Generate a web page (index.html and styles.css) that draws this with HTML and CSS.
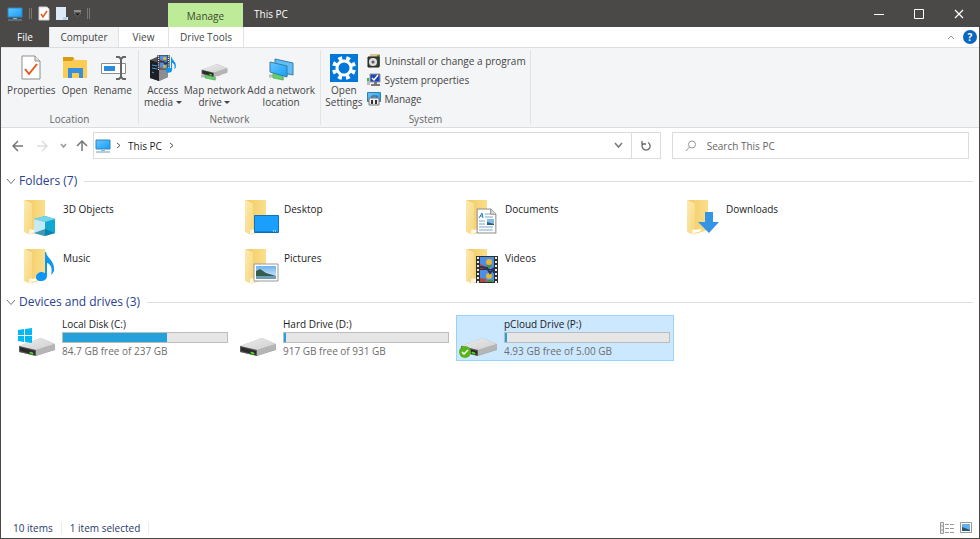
FILE: index.html
```html
<!DOCTYPE html>
<html lang="en">
<head>
    <meta charset="UTF-8">
    <meta name="viewport" content="width=device-width, initial-scale=1.0">
    <title>This PC</title>
    <link rel="stylesheet" href="styles.css">
</head>
<body>
    <!-- Shared icon parts -->
    <svg class="defs" width="0" height="0" aria-hidden="true">
        <defs>
            <linearGradient id="gBack" x1="0" y1="0" x2="1" y2="0">
                <stop offset="0" stop-color="#f1c95f"/>
                <stop offset="1" stop-color="#fbdf8c"/>
            </linearGradient>
            <linearGradient id="gFront" x1="0" y1="0" x2="1" y2="1">
                <stop offset="0" stop-color="#fdeab0"/>
                <stop offset="1" stop-color="#f6d67c"/>
            </linearGradient>
            <linearGradient id="gScreen" x1="0" y1="0" x2="1" y2="1">
                <stop offset="0" stop-color="#6cc5ff"/>
                <stop offset="0.5" stop-color="#3db2fc"/>
                <stop offset="1" stop-color="#1a9cf5"/>
            </linearGradient>
            <linearGradient id="gDrive" x1="0" y1="0" x2="1" y2="1">
                <stop offset="0" stop-color="#ececec"/>
                <stop offset="1" stop-color="#cfcfcf"/>
            </linearGradient>
            <linearGradient id="gSky" x1="0" y1="0" x2="0" y2="1">
                <stop offset="0" stop-color="#6fb1ee"/>
                <stop offset="1" stop-color="#dff1fc"/>
            </linearGradient>
            <symbol id="folder" viewBox="0 0 34 38">
                <path d="M1 1h21v30l-13 4V5z" fill="url(#gBack)"/>
                <path d="M9 34v-3l6-1v2z" fill="#fff"/>
                <path d="M1 1l8 4v29l-1 2-7-3z" fill="url(#gFront)"/>
                <path d="M6 31l3-1v4l-1 2-2-1z" fill="#fff6dc"/>
            </symbol>
            <symbol id="drive" viewBox="0 0 38 20">
                <path d="M1 9L23 1l14 6v6L18 19 1 15z" fill="#a9a9a9"/>
                <path d="M1 9L23 1l14 6-19 6z" fill="url(#gDrive)"/>
                <path d="M18 13l19-6v5l-19 7z" fill="#b5b5b5"/>
                <path d="M1 9l17 4v6L1 15z" fill="#5a5a5a"/>
                <path d="M2 10l15 4v4L2 14z" fill="#2b2b2b"/>
                <path d="M12 15l3 1v1l-3-1z" fill="#4bee20" stroke="#4bee20" stroke-width=".7"/>
            </symbol>
            <symbol id="monitor" viewBox="0 0 16 14">
                <path d="M1 1h14v9H1z" fill="url(#gScreen)" stroke="#2c86c0"/>
                <path d="M6 11h4v1H6z" fill="#9db6c6"/>
                <path d="M1 13h14" stroke="#6f97b2"/>
            </symbol>
            <symbol id="film" viewBox="0 0 22 27">
                <path d="M0 0h22v27H0z" fill="#30302e"/>
                <path d="M4 1h14v12H4zM4 14h14v12H4z" fill="#4b8fe8"/>
                <path d="M2 1v26M20 1v26" stroke="#eee" stroke-width="2" stroke-dasharray="2 2"/>
                <path d="M4 8l5 2 2 3H4zM4 22l6 1v3H4z" fill="#b5483c"/>
                <circle cx="13" cy="6" r="3" fill="#e8b829"/>
                <circle cx="13" cy="20" r="3" fill="#e8b829"/>
                <path d="M10 9h6l-3 4zM11 24h6v2h-6z" fill="#4d8f36"/>
                <path d="M4 11l7 1 3 5 3-4 1 4" fill="none" stroke="#263261" stroke-width="2"/>
            </symbol>
            <symbol id="note" viewBox="0 0 20 30">
                <path d="M10 0c1 7 9 8 8 19-1 2-2 3-3 4 2-8-1-11-4-12v13c0 3-3 5-6 5s-5-1-5-4 3-5 6-5l3 1V0z" fill="#0e96f3"/>
            </symbol>
            <symbol id="netplug" viewBox="0 0 20 9">
                <path d="M0 4h4M12 6l3 1M16 3l3-1" stroke="#b9bdb9" stroke-width="3"/>
                <path d="M4 1l10 2v5L4 6z" fill="#61cf6b" stroke="#43a94d" stroke-width=".6"/>
            </symbol>
            <symbol id="page" viewBox="0 0 20 25">
                <path d="M1 1h13l5 5v18H1z" fill="#fdfdfd" stroke="#8e8e8e"/>
                <path d="M14 1v5h5" fill="#dcdcdc" stroke="#8e8e8e"/>
            </symbol>
        </defs>
    </svg>

    <div class="window">
        <header class="titlebar">
            <div class="quick">
                <svg width="16" height="14" aria-hidden="true"><use href="#monitor"/></svg>
                <span class="grip"></span>
                <button class="plain" aria-label="Properties">
                    <svg width="12" height="15" viewBox="0 0 12 15"><path d="M1 1h8l2 2v11H1z" fill="#fff" stroke="#cfcfcf"/><path d="M3 8l2 3 4-6" fill="none" stroke="#e8571d" stroke-width="1.5"/></svg>
                </button>
                <button class="plain" aria-label="New folder">
                    <svg width="12" height="15" viewBox="0 0 12 15"><path d="M0 1h10v10h2v3H0z" fill="#dceaf8"/><path d="M7 11h4v3H7z" fill="#b5cfe9"/></svg>
                </button>
                <button class="plain" aria-label="Customize toolbar">
                    <svg width="7" height="7" viewBox="0 0 7 7"><path d="M0 1h7" stroke="#d0d0d0"/><path d="M0 3h7L3.500 6z" fill="#111" stroke="#aaa" stroke-width=".5"/></svg>
                </button>
                <span class="grip"></span>
            </div>
            <div class="context-title">Manage</div>
            <h1>This PC</h1>
            <div class="controls">
                <button class="plain" aria-label="Minimize"><svg width="10" height="10"><path d="M0 5.500h10" stroke="#fff"/></svg></button>
                <button class="plain" aria-label="Maximize"><svg width="10" height="10"><path d="M.5.500h9v9h-9z" fill="none" stroke="#fff"/></svg></button>
                <button class="plain" aria-label="Close"><svg width="10" height="10"><path d="M1 1l8 8M9 1l-8 8" stroke="#fff" stroke-width="1.200"/></svg></button>
            </div>
        </header>

        <nav class="tabs">
            <button class="tab file">File</button>
            <button class="tab active">Computer</button>
            <button class="tab view">View</button>
            <button class="tab tools">Drive Tools</button>
            <div class="help">
                <button class="plain" aria-label="Collapse ribbon"><svg width="8" height="6"><path d="M1 5l3-3 3 3" fill="none" stroke="#999"/></svg></button>
                <button class="plain round" aria-label="Help">?</button>
            </div>
        </nav>

        <div class="ribbon">
            <section class="group location">
                <div class="tools-row">
                    <button class="tool">
                        <svg width="28" height="28" viewBox="0 0 28 28"><path d="M5 2h13l5 5v18H5z" fill="#fff" stroke="#8e8e8e"/><path d="M18 2v5h5" fill="#e6e6e6" stroke="#8e8e8e"/><path d="M8 15l4 5 8-10" fill="none" stroke="#e8571d" stroke-width="2"/></svg>
                        Properties
                    </button>
                    <button class="tool">
                        <svg width="28" height="28" viewBox="0 0 28 28"><path d="M2 3h10l2 3h12v18H2z" fill="#fccc55"/><path d="M2 3h10l1 2-2 2H2z" fill="#d79c14"/><path d="M7 24V14h15v10h-4v-5h-7v5z" fill="#3690dd"/></svg>
                        Open
                    </button>
                    <button class="tool">
                        <svg width="28" height="28" viewBox="0 0 28 28"><path d="M2.500 9.500h24v10h-24z" fill="#fff" stroke="#8c8c8c"/><path d="M5 12h11v5H5z" fill="#298ae0"/><path d="M17 3h3l2 2 2-2h3M22 4v20M17 25h3l2-2 2 2h3" fill="none" stroke="#666" stroke-width="2"/></svg>
                        Rename
                    </button>
                </div>
                <h2>Location</h2>
            </section>
            <section class="group network">
                <div class="tools-row">
                    <button class="tool">
                        <svg width="28" height="28" viewBox="0 0 28 28"><path d="M1 6l9-4 9 4v17l-9 4-9-3z" fill="#555"/><path d="M1 6l9 3v18l-9-3z" fill="#1d1f22"/><path d="M10 9l9-3v17l-9 4z" fill="#8b8f93"/><path d="M3 11l5 1M3 14l5 1M3 18l2 1" stroke="#3aa0ee"/><use href="#film" x="8" y="1" width="13" height="15"/><use href="#note" x="17" y="1" width="11" height="20"/></svg>
                        <span>Access<br>media <i class="caret"></i></span>
                    </button>
                    <button class="tool">
                        <svg width="28" height="28" viewBox="0 0 28 28"><use href="#netplug" x="1" y="18" width="20" height="9"/><use href="#drive" x="1" y="9" width="27" height="15"/></svg>
                        <span>Map network<br>drive <i class="caret"></i></span>
                    </button>
                    <button class="tool">
                        <svg width="28" height="28" viewBox="0 0 28 28"><use href="#netplug" x="2" y="18" width="20" height="9"/><path d="M8 5l18 4v12L8 17z" fill="#63bcf5" stroke="#347ea8"/><path d="M3 8l17 4v11L3 18z" fill="url(#gScreen)" stroke="#347ea8"/></svg>
                        <span>Add a network<br>location</span>
                    </button>
                </div>
                <h2>Network</h2>
            </section>
            <section class="group system">
                <div class="tools-row">
                    <button class="tool">
                        <svg width="28" height="28" viewBox="0 0 28 28"><path d="M0 0h28v28H0z" fill="#0078d9"/><circle cx="14" cy="14" r="7" fill="none" stroke="#fff" stroke-width="3"/><circle cx="14" cy="14" r="10" fill="none" stroke="#fff" stroke-width="4" stroke-dasharray="3.927 3.927" transform="rotate(11 14 14)"/></svg>
                        <span>Open<br>Settings</span>
                    </button>
                    <div class="small-tools">
                        <button class="small-tool">
                            <svg width="14" height="14" viewBox="0 0 14 14"><path d="M3 0h10v10H3z" fill="#d9c58f"/><path d="M10 1h3v11h-3z" fill="#639b53"/><path d="M1 3h11v10H1z" fill="#40423e" stroke="#222"/><circle cx="6" cy="8" r="4" fill="#ddd"/><circle cx="6" cy="8" r="1.500" fill="#555"/></svg>
                            Uninstall or change a program
                        </button>
                        <button class="small-tool">
                            <svg width="14" height="14" viewBox="0 0 14 14"><path d="M3 1h10v8H3z" fill="#1c45b9" stroke="#999"/><path d="M5 5l2 2 4-5" fill="none" stroke="#fff" stroke-width="1.500"/><path d="M0 5h3v7H0z" fill="#bbb"/><path d="M1 5v3" stroke="#38b948" stroke-width="2"/><path d="M4 12h9M7 10h3" stroke="#777" stroke-width="2"/></svg>
                            System properties
                        </button>
                        <button class="small-tool">
                            <svg width="14" height="14" viewBox="0 0 14 14"><path d="M.5.500h13v9H.5z" fill="url(#gScreen)" stroke="#347ea8"/><path d="M5 6V4h5v2" fill="none" stroke="#555"/><path d="M2 6h10v7H2z" fill="#eee" stroke="#777"/><path d="M5 8v4M9 8v4" stroke="#333" stroke-width="2"/></svg>
                            Manage
                        </button>
                    </div>
                </div>
                <h2>System</h2>
            </section>
        </div>

        <div class="navbar">
            <div class="arrows">
                <button class="plain" aria-label="Back"><svg width="12" height="12"><path d="M11 6H1M6 1L1 6l5 5" fill="none" stroke="#777" stroke-width="1.500"/></svg></button>
                <button class="plain" aria-label="Forward"><svg width="12" height="12"><path d="M1 6h10M6 1l5 5-5 5" fill="none" stroke="#ddd" stroke-width="1.500"/></svg></button>
                <button class="plain" aria-label="Recent locations"><svg width="7" height="6"><path d="M1 1l2.500 3L6 1" fill="none" stroke="#999" stroke-width="1.500"/></svg></button>
                <button class="plain" aria-label="Up"><svg width="12" height="12"><path d="M6 11V1M1 6l5-5 5 5" fill="none" stroke="#777" stroke-width="1.500"/></svg></button>
            </div>
            <div class="address">
                <svg width="16" height="14" aria-hidden="true"><use href="#monitor"/></svg>
                <svg width="5" height="7" aria-hidden="true"><path d="M1 1l3 2.500L1 6" fill="none" stroke="#555"/></svg>
                <button class="plain crumb">This PC</button>
                <svg width="5" height="7" aria-hidden="true"><path d="M1 1l3 2.500L1 6" fill="none" stroke="#555"/></svg>
                <button class="plain drop" aria-label="Previous locations"><svg width="9" height="7"><path d="M1 1l3.500 4L8 1" fill="none" stroke="#777" stroke-width="1.500"/></svg></button>
                <button class="plain refresh" aria-label="Refresh"><svg width="10" height="11"><path d="M7 2.500a4 4 0 1 1-5 1M1 1v3h4" fill="none" stroke="#666" stroke-width="1.300"/></svg></button>
            </div>
            <label class="search">
                <svg width="12" height="12" aria-hidden="true"><circle cx="7" cy="4.500" r="3.500" fill="none" stroke="#999"/><path d="M4.500 7L1 11" stroke="#999"/></svg>
                <input type="text" placeholder="Search This PC" aria-label="Search This PC">
            </label>
        </div>

        <main>
            <section>
                <div class="heading">
                    <button class="plain" aria-label="Toggle folders"><svg width="10" height="7"><path d="M1 1l4 4.500L9 1" fill="none" stroke="#777"/></svg></button>
                    <h2>Folders (7)</h2>
                </div>
                <div class="tiles folders">
                    <button class="tile">
                        <svg width="34" height="38" viewBox="0 0 34 38"><use href="#folder"/><path d="M11 20l11-3 10 3v14l-10 3-11-3z" fill="#11a8d3"/><path d="M11 20l11-3 10 3-10 3z" fill="#72d5e8"/><path d="M11 20l11 3v14l-11-3z" fill="#c5eaf2"/><path d="M11 34l11-4 10 4-10 3z" fill="#07749c" opacity=".7"/></svg>
                        <span>3D Objects</span>
                    </button>
                    <button class="tile">
                        <svg width="34" height="38" viewBox="0 0 34 38"><use href="#folder"/><path d="M10.500 16.500h24v17h-24z" fill="#1a9ffc" stroke="#1174b9"/><path d="M11 33h22" stroke="#0768a8"/><path d="M29 32h4" stroke="#fff" stroke-dasharray="1 1"/></svg>
                        <span>Desktop</span>
                    </button>
                    <button class="tile">
                        <svg width="34" height="38" viewBox="0 0 34 38"><use href="#folder"/><use href="#page" x="11" y="9" width="21" height="26"/><path d="M14 19l3-5 1 5M15 17h3" stroke="#2182c9" fill="none"/><path d="M20 15h5M20 18h8M14 22h6M14 25h6M14 28h14M14 31h14" stroke="#7aaacd"/><path d="M22 20h7v6h-7z" fill="#80bce5"/><path d="M22 23l7 2v1h-7z" fill="#345f6f"/></svg>
                        <span>Documents</span>
                    </button>
                    <button class="tile">
                        <svg width="34" height="38" viewBox="0 0 34 38"><use href="#folder"/><path d="M19 13h8v10h6L23 34 12 23h7z" fill="#3595e4"/></svg>
                        <span>Downloads</span>
                    </button>
                    <button class="tile">
                        <svg width="34" height="38" viewBox="0 0 34 38"><use href="#folder"/><use href="#note" x="13" y="4" width="20" height="30"/></svg>
                        <span>Music</span>
                    </button>
                    <button class="tile">
                        <svg width="34" height="38" viewBox="0 0 34 38"><use href="#folder"/><path d="M10 16h24v17H10z" fill="#fff" stroke="#999"/><path d="M12 18h20v13H12z" fill="url(#gSky)"/><path d="M12 23l4-2 6 4 10 3v1H12z" fill="#345d4d"/><path d="M12 28h20v3H12z" fill="#6d9eb5"/></svg>
                        <span>Pictures</span>
                    </button>
                    <button class="tile">
                        <svg width="34" height="38" viewBox="0 0 34 38"><use href="#folder"/><use href="#film" x="11" y="8" width="22" height="27"/></svg>
                        <span>Videos</span>
                    </button>
                </div>
            </section>

            <section>
                <div class="heading">
                    <button class="plain" aria-label="Toggle devices and drives"><svg width="10" height="7"><path d="M1 1l4 4.500L9 1" fill="none" stroke="#777"/></svg></button>
                    <h2>Devices and drives (3)</h2>
                </div>
                <div class="tiles drives">
                    <button class="tile">
                        <svg width="40" height="32" viewBox="0 0 40 32"><use href="#drive" x="1" y="11" width="38" height="20"/><path d="M1 4l6-1v6H1zM8 3l7-1v7H8zM1 10h6v6l-6-1zM8 10h7v7l-7-1z" fill="#00b9f5"/></svg>
                        <span class="info">
                            <span>Local Disk (C:)</span>
                            <progress max="237" value="151" aria-label="Space used on C:"></progress>
                            <span class="free">84.7 GB free of 237 GB</span>
                        </span>
                    </button>
                    <button class="tile">
                        <svg width="40" height="32" viewBox="0 0 40 32"><use href="#drive" x="1" y="11" width="38" height="20"/></svg>
                        <span class="info">
                            <span>Hard Drive (D:)</span>
                            <progress max="931" value="10" aria-label="Space used on D:"></progress>
                            <span class="free">917 GB free of 931 GB</span>
                        </span>
                    </button>
                    <button class="tile selected">
                        <svg width="40" height="32" viewBox="0 0 40 32"><use href="#drive" x="1" y="11" width="38" height="20"/><circle cx="6" cy="26" r="6" fill="#56b51b"/><path d="M3 26l2 2 4-4" fill="none" stroke="#fff" stroke-width="1.500"/></svg>
                        <span class="info">
                            <span>pCloud Drive (P:)</span>
                            <progress max="500" value="6" aria-label="Space used on P:"></progress>
                            <span class="free">4.93 GB free of 5.00 GB</span>
                        </span>
                    </button>
                </div>
            </section>
        </main>

        <footer>
            <span>10 items</span>
            <span>1 item selected</span>
            <div class="views">
                <button class="plain" aria-label="Details view"><svg width="14" height="12"><path d="M.5.500h3v11h-3zM.5 4h3M.5 8h3" fill="#e6edf5" stroke="#999"/><path d="M5 2.500h9M5 6.500h9M5 10.500h9" stroke="#999" stroke-dasharray="4 1"/></svg></button>
                <button class="plain" aria-label="Large icons view"><svg width="12" height="11"><path d="M.5.500h11v10H.5z" fill="#fff" stroke="#999"/><path d="M2 2h8v7H2z" fill="#67b0f0"/><path d="M2 5l3 1 5 2v1H2z" fill="#31556b"/></svg></button>
            </div>
        </footer>
    </div>
</body>
</html>
```

FILE: styles.css
```css
* {
    box-sizing: border-box;
}
body {
    margin: 0;
    font-family: "Open Sans", "Noto Sans", sans-serif;
    font-size: 10px;
    line-height: 12px;
    color: #1b1b1b;
    background-color: #fff;
}
h1, h2 {
    margin: 0;
    font-weight: normal;
}
svg {
    display: block;
    flex: none;
}
button {
    font: inherit;
    color: inherit;
    background: none;
    border: none;
    padding: 0;
}
.defs {
    position: absolute;
}
.plain {
    display: flex;
    align-items: center;
    justify-content: center;
}
.window {
    display: flex;
    flex-direction: column;
    min-height: 100vh;
    border: 1px solid #4a4947;
    border-top: none;
}

/* Title bar */
.titlebar {
    display: flex;
    height: 27px;
    background-color: #4a4947;
    color: #fff;
}
.quick {
    display: flex;
    align-items: center;
    gap: 6px;
    width: 167px;
    padding-left: 6px;
}
.grip {
    width: 3px;
    height: 11px;
    border: 1px solid #777;
    border-width: 0 1px;
}
.context-title {
    width: 75px;
    margin-top: 3px;
    padding-top: 7px;
    text-align: center;
    background-color: #beeb98;
    color: #3c4a30;
}
h1 {
    padding: 8px 11px;
    font-size: 10px;
    line-height: 12px;
}
.controls {
    display: flex;
    margin-left: auto;
}
.controls .plain {
    width: 40px;
}

/* Ribbon */
.tabs {
    display: flex;
    height: 20px;
    color: #444;
}
.tab {
    border-right: 1px solid #e2e2e3;
}
.file {
    width: 49px;
    background-color: #4a4947;
    color: #fff;
}
.active {
    width: 69px;
    background-color: #f4f5f7;
}
.view {
    width: 50px;
}
.tools {
    width: 75px;
}
.help {
    display: flex;
    gap: 8px;
    align-items: center;
    margin-left: auto;
    padding-right: 2px;
}
.round {
    width: 14px;
    height: 14px;
    border-radius: 50%;
    background-color: #0b67c2;
    color: #fff;
    font-size: 10px;
    font-weight: bold;
}
.ribbon {
    display: flex;
    height: 81px;
    padding: 2px 0;
    background-color: #f4f5f7;
    border: 1px solid #dcdddf;
    border-width: 1px 0;
    color: #444;
}
.group {
    display: flex;
    flex-direction: column;
    justify-content: space-between;
    border-right: 1px solid #e2e3e5;
    white-space: nowrap;
}
.group h2 {
    font-size: 10px;
    line-height: 12px;
    text-align: center;
    color: #666;
}
.tools-row {
    display: flex;
    justify-content: center;
    gap: 5px;
    padding-top: 4px;
}
.location {
    width: 138px;
}
.network {
    width: 182px;
}
.system {
    width: 210px;
}
.network .tools-row {
    gap: 2px;
}
.tool {
    display: flex;
    flex-direction: column;
    align-items: center;
    gap: 2px;
}
.caret {
    display: inline-block;
    border: 3px solid transparent;
    border-top-color: #444;
    border-bottom: none;
    vertical-align: 2px;
}
.small-tools {
    display: flex;
    flex-direction: column;
    gap: 5px;
}
.small-tool {
    display: flex;
    align-items: center;
    gap: 3px;
    line-height: 14px;
}

/* Address and search */
.navbar {
    display: flex;
    gap: 11px;
    padding: 4px 10px 0 11px;
}
.arrows {
    display: flex;
    align-items: center;
    gap: 12px;
}
.arrows .plain:last-child {
    margin-left: -3px;
}
.address, .search {
    display: flex;
    align-items: center;
    height: 27px;
    border: 1px solid #dcdcdc;
}
.address {
    flex: 2 1 0;
    gap: 5px;
    margin-left: -6px;
    padding-left: 1px;
}
.crumb {
    margin: 0 2px;
}
.drop {
    margin-left: auto;
    padding-right: 3px;
}
.refresh {
    width: 29px;
    height: 25px;
    border-left: 1px solid #dcdcdc;
}
.search {
    flex: 1 1 15px;
    gap: 10px;
    padding-left: 12px;
}
.search input {
    flex: 1;
    min-width: 0;
    padding: 0;
    border: none;
    outline: none;
    font: inherit;
}
.search input::placeholder {
    color: #666;
}

/* File list */
main {
    flex: 1;
    padding: 12px 6px 0 5px;
}
.heading {
    display: flex;
    align-items: center;
    gap: 3px;
    height: 20px;
}
.heading::after {
    content: "";
    flex: 1;
    height: 1px;
    margin-left: 4px;
    background-color: #dedede;
}
.heading h2 {
    font-size: 12px;
    line-height: 20px;
    color: #29428f;
}
.tiles {
    display: grid;
    grid-template-columns: repeat(auto-fill, 218px);
    column-gap: 3px;
    padding-left: 8px;
}
.tile {
    display: flex;
    text-align: left;
    border: 1px solid transparent;
}
.folders {
    padding-top: 3px;
}
.folders .tile {
    height: 49px;
    gap: 6px;
    padding: 4px 0 0 8px;
}
.folders .tile svg {
    overflow: visible;
}
.folders .tile span {
    padding-top: 4px;
}
.drives {
    padding-top: 3px;
}
.drives .tile {
    gap: 5px;
    height: 46px;
    padding: 2px 3px 0 2px;
}
.drives .tile svg {
    margin-top: 8px;
}
.info {
    display: flex;
    flex-direction: column;
    flex: 1;
    gap: 2px;
}
.free {
    color: #6d6d6d;
}
progress {
    appearance: none;
    display: block;
    width: 100%;
    height: 11px;
    border: 1px solid #bcbcbc;
    background-color: #e6e6e6;
}
progress::-webkit-progress-bar {
    background-color: #e6e6e6;
}
progress::-webkit-progress-value {
    background-color: #26a0da;
}
.selected {
    background-color: #cce8ff;
    border-color: #99d1ff;
}

/* Status bar */
footer {
    display: flex;
    align-items: center;
    height: 21px;
    padding: 0 7px 0 12px;
    color: #26386b;
}
footer span {
    padding-right: 8px;
    margin-right: 8px;
    border-right: 1px solid #ececec;
}
.views {
    display: flex;
    gap: 6px;
    margin-left: auto;
}
```
